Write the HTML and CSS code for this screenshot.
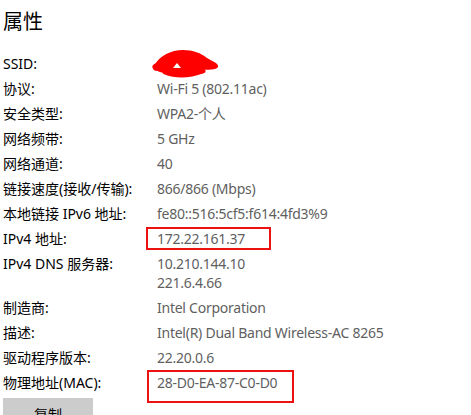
FILE: index.html
```html
<!DOCTYPE html>
<html lang="zh">
<head>
<meta charset="utf-8">
<link rel="stylesheet" href="styles.css">
</head>
<body>
<div class="page">
  <h1 class="title">属性</h1>
  <div class="props">
    <div class="row">
      <div class="label">SSID:</div>
      <div class="value scribble-cell">
        <svg class="scribble" width="72" height="32" viewBox="0 0 72 32">
          <path d="M3 20 C8 10 20 4 32 4 C42 4 50 7 56 12 C62 16 68 17 67 21 C64 25 56 23 50 24 C44 28 36 30 26 29 C18 28 10 27 4 24 Z" fill="#ff0000"/>
          <path d="M5 21 C14 16 22 12 30 11 C40 10 50 13 60 19" stroke="#ff0000" stroke-width="7" fill="none" stroke-linecap="round"/>
          <path d="M14 26 C24 30 38 30 52 25" stroke="#ff0000" stroke-width="5" fill="none" stroke-linecap="round"/>
          <path d="M22 22 L26 17 L30 22 Z" fill="#ffffff"/>
        </svg>
      </div>
    </div>
    <div class="row"><div class="label">协议:</div><div class="value">Wi-Fi 5 (802.11ac)</div></div>
    <div class="row"><div class="label">安全类型:</div><div class="value">WPA2-个人</div></div>
    <div class="row"><div class="label">网络频带:</div><div class="value">5 GHz</div></div>
    <div class="row"><div class="label">网络通道:</div><div class="value">40</div></div>
    <div class="row"><div class="label">链接速度(接收/传输):</div><div class="value">866/866 (Mbps)</div></div>
    <div class="row"><div class="label">本地链接 IPv6 地址:</div><div class="value">fe80::516:5cf5:f614:4fd3%9</div></div>
    <div class="row"><div class="label">IPv4 地址:</div><div class="value"><span class="mark mark-ip">172.22.161.37</span></div></div>
    <div class="row"><div class="label">IPv4 DNS 服务器:</div><div class="value">10.210.144.10<br>221.6.4.66</div></div>
    <div class="row"><div class="label">制造商:</div><div class="value">Intel Corporation</div></div>
    <div class="row"><div class="label">描述:</div><div class="value">Intel(R) Dual Band Wireless-AC 8265</div></div>
    <div class="row"><div class="label">驱动程序版本:</div><div class="value">22.20.0.6</div></div>
    <div class="row"><div class="label">物理地址(MAC):</div><div class="value"><span class="mark mark-mac">28-D0-EA-87-C0-D0</span></div></div>
  </div>
  <button class="copy">复制</button>
</div>
</body>
</html>
```
FILE: styles.css
```css
html, body {
  margin: 0;
  padding: 0;
  background: #ffffff;
}
body {
  font-family: "Noto Sans", "Noto Sans CJK SC", sans-serif;
  font-size: 14px;
  color: #000;
}
.page {
  padding: 8px 0 0 3px;
}
.title {
  margin: 0;
  font-weight: normal;
  font-size: 20px;
  line-height: 28px;
}
.props {
  margin-top: 18px;
  display: flex;
  flex-direction: column;
  gap: 6px;
}
.row {
  display: grid;
  grid-template-columns: 154px 1fr;
  line-height: 19px;
}
.value {
  color: #5f5f5f;
  letter-spacing: -0.25px;
}
.scribble-cell {
  position: relative;
  height: 19px;
}
.scribble {
  position: absolute;
  left: -6px;
  top: -8px;
}
.mark {
  display: inline-block;
  position: relative;
}
.mark::after {
  content: "";
  position: absolute;
  border: 2px solid #ee1111;
}
.mark-ip::after {
  left: -11px;
  top: -2px;
  width: 121px;
  height: 19px;
}
.mark-mac::after {
  left: -10px;
  top: -3px;
  width: 143px;
  height: 29px;
}
.copy {
  display: block;
  margin-top: 6px;
  width: 90px;
  height: 32px;
  border: none;
  background: #cccccc;
  font-family: inherit;
  font-size: 14px;
  color: #000;
  padding: 0;
}
```
